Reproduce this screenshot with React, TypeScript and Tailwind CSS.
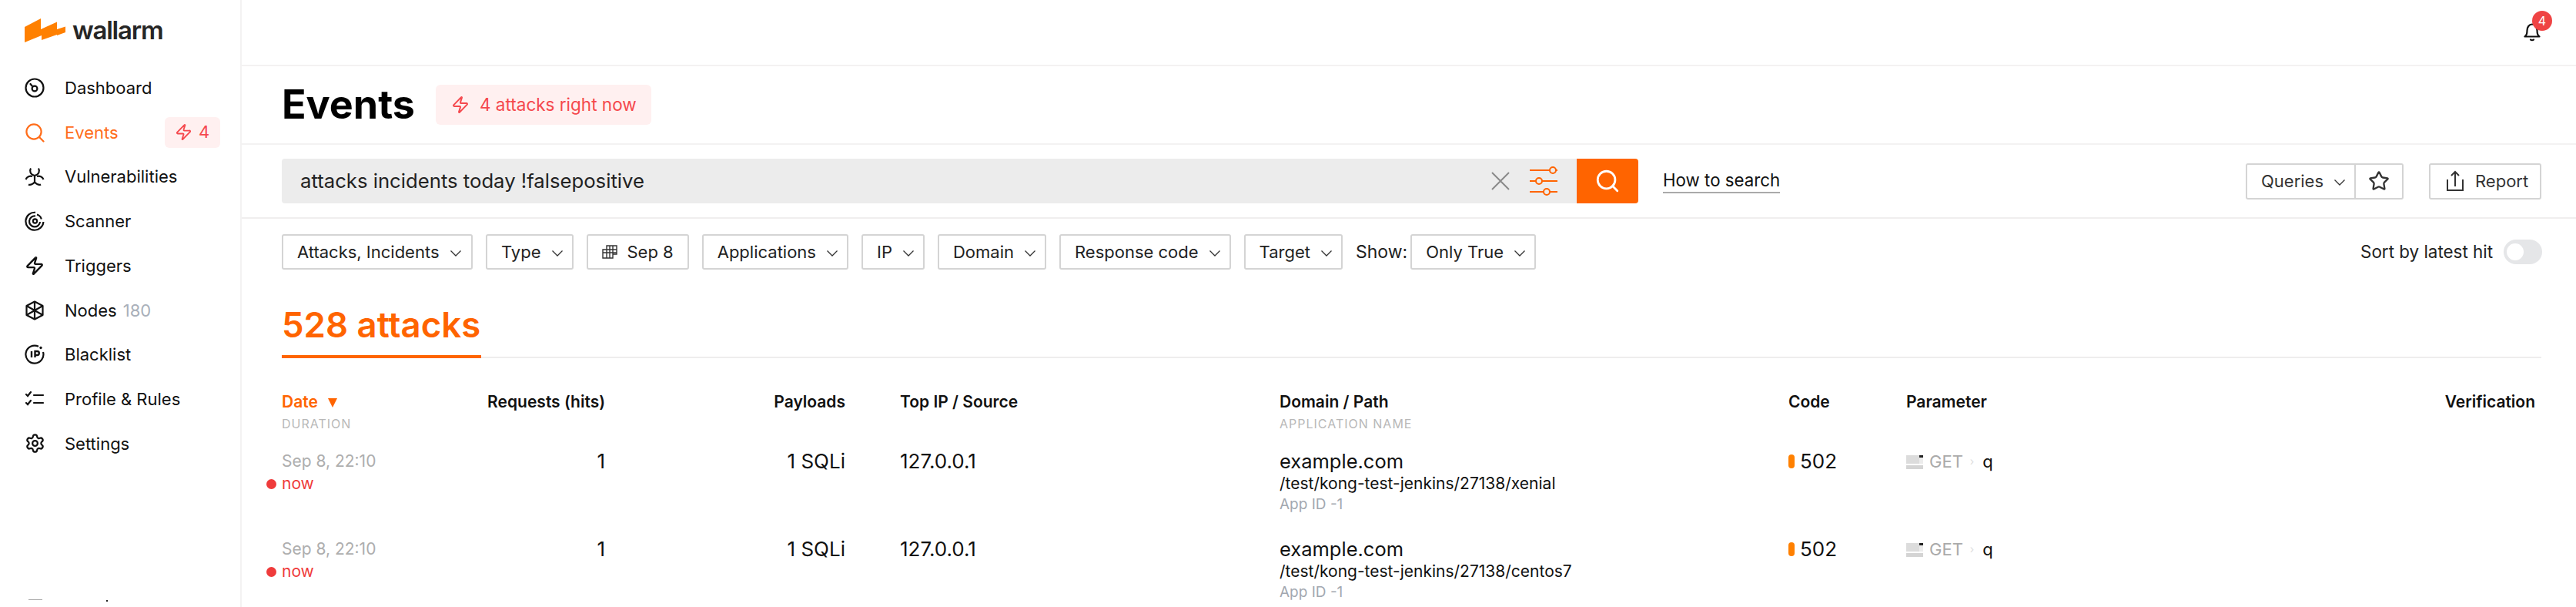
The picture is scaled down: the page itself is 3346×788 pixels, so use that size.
import { Search, Settings, Star, Zap } from "lucide-react";
import React from "react";

const ORANGE = "#ff6400";

function IconDashboard() {
  return (
    <svg width="26" height="26" viewBox="0 0 26 26" fill="none" stroke="#111" strokeWidth="2.2">
      <circle cx="13" cy="13" r="11.5" />
      <circle cx="13" cy="14" r="3.4" />
      <path d="M10.5 11.5 7.5 8" strokeLinecap="round" />
    </svg>
  );
}

function IconEvents() {
  return (
    <svg width="26" height="26" viewBox="0 0 26 26" fill="none" stroke="#ff6d1a" strokeWidth="2.2">
      <circle cx="12" cy="12" r="9.6" />
      <path d="m19 19 5.5 5.5" strokeLinecap="round" />
    </svg>
  );
}

function IconBiohazard() {
  return (
    <svg width="26" height="26" viewBox="0 0 26 26" fill="none" stroke="#111" strokeWidth="2.2">
      <path d="M8 2.5c-2.2 3.8-.6 8 5 9.500 5.600-1.500 7.200-5.700 5-9.500" />
      <path d="M1.500 17c1.300-3.500 5-5.200 8.500-4" />
      <path d="M24.500 17c-1.300-3.500-5-5.200-8.500-4" />
      <path d="M5 23.500c3 1.500 5.500-.5 8-3 2.500 2.500 5 4.500 8 3" />
      <path d="M13 13v7" />
    </svg>
  );
}

function IconScanner() {
  return (
    <svg width="26" height="26" viewBox="0 0 26 26" fill="none" stroke="#111" strokeWidth="2.2">
      <path d="M14 1.800A11.500 11.500 0 1 0 24.400 14" />
      <path d="M14 6.500A7 7 0 1 0 20 14" />
      <circle cx="13.500" cy="13" r="2.600" />
      <path d="M16 4.500c3 .8 5 3 5.800 6" />
    </svg>
  );
}

function IconNodes() {
  return (
    <svg width="26" height="26" viewBox="0 0 26 26" fill="none" stroke="#111" strokeWidth="2.2" strokeLinejoin="round">
      <path d="M13 1.500 23.500 7v12L13 24.500 2.500 19V7z" />
      <path d="M13 1.500v23M2.500 7 23.500 19M23.500 7 2.500 19" />
    </svg>
  );
}

function IconBlacklist() {
  return (
    <svg width="26" height="26" viewBox="0 0 26 26" fill="none" stroke="#111" strokeWidth="2.2">
      <path d="M18 2.800A11.500 11.500 0 1 0 24 10" />
      <path d="M9 9v8M13.500 17V9h2.800a2.500 2.500 0 0 1 0 5h-2.800" strokeWidth="2.400" />
      <circle cx="21" cy="4.500" r="1.300" fill="#111" strokeWidth="1" />
    </svg>
  );
}

function IconProfile() {
  return (
    <svg width="26" height="26" viewBox="0 0 26 26" fill="none" stroke="#111" strokeWidth="2.2" strokeLinecap="round">
      <path d="m2 7 2 2 4-5M2 18l2 2 4-5" />
      <path d="M12 8h12M12 18h12" />
    </svg>
  );
}

function IconSliders() {
  return (
    <svg width="38" height="38" viewBox="0 0 38 38" fill="none" stroke={ORANGE} strokeWidth="2">
      <path d="M1 5h26M35 5h2M1 19h8M17 19h20M1 33h18M27 33h10" />
      <circle cx="31" cy="5" r="4" />
      <circle cx="13" cy="19" r="4" />
      <circle cx="23" cy="33" r="4" />
    </svg>
  );
}

function IconClear() {
  return (
    <svg width="24" height="24" viewBox="0 0 24 24" fill="none" stroke="#8a8a8a" strokeWidth="2">
      <path d="m1 1 22 22M23 1 1 23" />
    </svg>
  );
}

function IconChevron({ className }: { className?: string }) {
  return (
    <svg width="14" height="8" viewBox="0 0 14 8" fill="none" stroke="#333" strokeWidth="1.3" className={className}>
      <path d="m.5.5 6.500 6.500 6.500-6.500" />
    </svg>
  );
}

function IconBell() {
  return (
    <svg width="22" height="26" viewBox="0 0 22 26" fill="none" stroke="#111" strokeWidth="2.2">
      <path d="M1.500 19.500h19c-2.500-1.500-3-3.500-3-8 0-4-2.500-8-6.500-8s-6.500 4-6.500 8c0 4.500-.5 6.500-3 8z" strokeLinejoin="round" />
      <path d="M9 23.500c1 1 3 1 4 0" strokeLinecap="round" />
    </svg>
  );
}

function IconCalendar() {
  return (
    <svg width="20" height="20" viewBox="0 0 20 20" fill="none" stroke="#333" strokeWidth="1.400">
      <path d="M6 2h13v11h-5v5H1V7h5zM6 2v16M10 2v16M14 2v16M1 7h18M1 11h18" />
    </svg>
  );
}

function IconUpload() {
  return (
    <svg width="22" height="28" viewBox="0 0 22 28" fill="none" stroke="#333" strokeWidth="2">
      <path d="M1 12v14h20V12M11 21V2M6 7l5-5 5 5" />
    </svg>
  );
}

function IconMethod() {
  return (
    <svg width="22" height="20" viewBox="0 0 22 20">
      <rect x="0" y="2" width="17" height="11" fill="#dcdcdc" />
      <rect x="17" y="2" width="5" height="3" fill="#222" />
      <rect x="17" y="5" width="5" height="8" fill="#ececec" />
      <rect x="0" y="15" width="22" height="5" fill="#d4d4d4" />
    </svg>
  );
}

const NAV_ITEMS = [
  { label: "Dashboard", icon: <IconDashboard /> },
  { label: "Events", icon: <IconEvents />, active: true },
  { label: "Vulnerabilities", icon: <IconBiohazard /> },
  { label: "Scanner", icon: <IconScanner /> },
  { label: "Triggers", icon: <Zap size={26} strokeWidth={2.2} className="text-[#111]" /> },
  { label: "Nodes", icon: <IconNodes />, count: "180" },
  { label: "Blacklist", icon: <IconBlacklist /> },
  { label: "Profile & Rules", icon: <IconProfile /> },
  { label: "Settings", icon: <Settings size={27} strokeWidth={2} className="text-[#111]" /> },
];

function Sidebar() {
  return (
    <aside className="flex h-full w-[314px] shrink-0 flex-col border-r-2 border-[#f3f2f2]">
      <div className="flex h-[85px] items-center pb-[6px] pl-[32px]">
        <svg width="54" height="32" viewBox="0 0 54 32" className="shrink-0">
          <path d="M0 11 21 0v14l21-9.500V14l11-3.500V18l-11 4v-1L22 28v-6L0 31z" fill="#ff8000" />
        </svg>
        <span className="ml-[8px] text-[33px] leading-none font-semibold tracking-[-1.2px] text-[#262626]">
          wallarm
        </span>
      </div>
      <nav className="flex flex-col">
        {NAV_ITEMS.map((item) => (
          <div key={item.label} className="flex h-[57.75px] items-center pl-[32px]">
            <span className="flex w-[52px] shrink-0 items-center">{item.icon}</span>
            <span
              className={`text-[22px] leading-none ${
                item.active ? "text-[#ff6d1a]" : "text-[#111]"
              }`}
            >
              {item.label}
            </span>
            {item.count && <span className="ml-[8px] text-[22px] leading-none text-[#a9b0ba]">{item.count}</span>}
            {item.active && (
              <span className="ml-[60px] flex h-[40px] w-[72px] items-center justify-center gap-[8px] rounded-[6px] bg-[#fff0f0] text-[22px] text-[#f5484d]">
                <Zap size={23} strokeWidth={2} />4
              </span>
            )}
          </div>
        ))}
      </nav>
      <div className="mt-auto flex h-[10px] items-start pl-[37px]">
        <span className="h-[1px] w-[18px] bg-[#aaaaaa]" />
        <span className="mt-[1px] ml-[83px] h-[2px] w-[2px] bg-[#222]" />
      </div>
    </aside>
  );
}

function FilterButton({
  label,
  icon,
  className = "",
}: {
  label: string;
  icon?: React.ReactNode;
  className?: string;
}) {
  return (
    <button
      className={`flex h-[46px] items-center rounded-[3px] border-2 border-[#d4d4d4] bg-white pl-[18px] text-[22px] leading-none text-[#222] ${
        icon ? "pr-[18px]" : "pr-[12px]"
      } ${className}`}
    >
      {icon ? <span className="mr-[13px] flex items-center">{icon}</span> : null}
      {label}
      {!icon && <IconChevron className="mt-[3px] ml-[14px]" />}
    </button>
  );
}

const ROW_GRID = "grid grid-cols-[220px_200px_312px_564px_661px_153px_1fr_200px] pr-[8px]";

const ROWS = [
  { path: "/test/kong-test-jenkins/27138/xenial" },
  { path: "/test/kong-test-jenkins/27138/centos7" },
];

function EventsTable() {
  return (
    <div className="flex flex-col">
      <div className={`${ROW_GRID} h-[120px] items-start pt-[45px] text-[21px] leading-[24px] font-semibold text-[#111]`}>
        <div>
          <div className="flex items-center text-[#ff6400]">
            Date
            <svg width="12" height="14" viewBox="0 0 12 14" className="mt-[2px] ml-[13px]">
              <path d="M0 1h12L6 13z" fill="#ff6400" />
            </svg>
          </div>
          <div className="mt-[7px] text-[16px] leading-[18px] font-normal tracking-[1px] text-[#b8b8b8]">DURATION</div>
        </div>
        <div className="text-right">Requests (hits)</div>
        <div className="text-right">Payloads</div>
        <div className="pl-[71px]">Top IP / Source</div>
        <div>
          Domain / Path
          <div className="mt-[7px] text-[16px] leading-[18px] font-normal tracking-[1px] text-[#b8b8b8]">APPLICATION NAME</div>
        </div>
        <div>Code</div>
        <div>Parameter</div>
        <div className="text-right">Verification</div>
      </div>
      {ROWS.map((row) => (
        <div key={row.path} className={`${ROW_GRID} h-[114px] items-start text-[26px] leading-[28px] text-[#111]`}>
          <div className="relative">
            <div className="text-[21px] leading-[28px] text-[#aeaeae]">Sep 8, 22:10</div>
            <div className="mt-[1px] text-[21px] leading-[28px] text-[#ef3b3b]">now</div>
            <span className="absolute top-[37px] -left-[20px] h-[13px] w-[13px] rounded-full bg-[#ef3b3b]" />
          </div>
          <div className="text-right">1</div>
          <div className="text-right">1 SQLi</div>
          <div className="pl-[71px]">127.0.0.1</div>
          <div>
            <div className="text-[25.5px] leading-[28px]">example.com</div>
            <div className="text-[21px] leading-[30px]">{row.path}</div>
            <div className="text-[19px] leading-[24px] text-[#a3a8b0]">App ID -1</div>
          </div>
          <div className="flex items-center gap-[7px]">
            <span className="h-[18px] w-[8px] rounded-full bg-[#ff8000]" />
            502
          </div>
          <div className="flex items-center text-[22px]">
            <IconMethod />
            <span className="ml-[8px] text-[#aaaaaa]">GET</span>
            <span className="mr-[11px] ml-[9px] text-[14px] text-[#dddddd]">›</span>
            q
          </div>
          <div />
        </div>
      ))}
    </div>
  );
}

export default function App() {
  return (
    <div
      className="flex h-[788px] w-[3346px] overflow-hidden bg-white"
      style={{ fontFamily: "Inter, 'Liberation Sans', sans-serif" }}
    >
      <Sidebar />
      <main className="flex min-w-0 flex-1 flex-col">
        <header className="flex h-[86px] shrink-0 items-center justify-end border-b-2 border-[#f3f2f2] pr-[46px]">
          <div className="relative mt-[-3px]">
            <IconBell />
            <span className="absolute -top-[14px] -right-[15px] flex h-[26px] w-[26px] items-center justify-center rounded-full bg-[#ef4444] text-[16px] leading-none text-white">
              4
            </span>
          </div>
        </header>

        <section className="flex h-[102px] shrink-0 items-center gap-[27px] border-b-2 border-[#f3f2f2] pl-[52px]">
          <h1 className="text-[52px] leading-none font-bold text-black">Events</h1>
          <div className="flex h-[52px] w-[280px] items-center rounded-[6px] bg-[#fff0f0] pl-[20px] text-[22.5px] text-[#f5484d]">
            <Zap size={24} strokeWidth={2} className="mr-[13px]" />4 attacks right now
          </div>
        </section>

        <section className="flex h-[96px] shrink-0 items-center border-b-2 border-[#f0eeee] pr-[45px] pl-[52px]">
          <div className="flex h-[58px] w-[1682px] items-center rounded-l-[4px] bg-[#ececec] pr-[24px] pl-[24px]">
            <span className="flex-1 text-[25.700px] leading-none text-[#222]">attacks incidents today !falsepositive</span>
            <span className="mr-[25px] flex">
              <IconClear />
            </span>
            <IconSliders />
          </div>
          <button className="flex h-[58px] w-[80px] items-center justify-center rounded-r-[4px] bg-[#ff6400]">
            <Search size={34} strokeWidth={2} className="text-white" />
          </button>
          <a className="ml-[32px] border-b-2 border-[#aaaaaa] text-[22.3px] leading-[30px] text-[#111]">How to search</a>
          <div className="ml-auto flex items-center gap-[33px]">
            <div className="flex h-[47px] items-center rounded-[3px] border-2 border-[#d4d4d4] text-[22px] text-[#333]">
              <span className="flex h-full w-[141px] items-center border-r-2 border-[#d4d4d4] pl-[18px]">
                Queries
                <IconChevron className="mt-[3px] ml-[14px]" />
              </span>
              <span className="flex w-[60px] justify-center">
                <Star size={28} strokeWidth={2} />
              </span>
            </div>
            <button className="flex h-[47px] w-[146px] items-center rounded-[3px] border-2 border-[#d4d4d4] pl-[21px] text-[22px] text-[#333]">
              <span className="mr-[15px] flex">
                <IconUpload />
              </span>
              Report
            </button>
          </div>
        </section>

        <section className="flex shrink-0 items-center gap-[17px] pt-[20px] pr-[44px] pl-[52px]">
          <FilterButton label="Attacks, Incidents" className="w-[248px]" />
          <FilterButton label="Type" />
          <FilterButton label="Sep 8" icon={<IconCalendar />} />
          <FilterButton label="Applications" />
          <FilterButton label="IP" />
          <FilterButton label="Domain" />
          <FilterButton label="Response code" />
          <FilterButton label="Target" />
          <div className="flex items-center gap-[4px]">
            <span className="text-[23px] leading-none text-[#222]">Show:</span>
            <FilterButton label="Only True" />
          </div>
          <div className="ml-auto flex items-center gap-[14px]">
            <span className="text-[22.4px] leading-none text-[#222]">Sort by latest hit</span>
            <span className="flex h-[32px] w-[50px] items-center rounded-full bg-[#e5e6e8] pl-[4px]">
              <span className="h-[22px] w-[22px] rounded-full bg-white" />
            </span>
          </div>
        </section>

        <section className="mr-[45px] ml-[52px] flex flex-col">
          <div className="mt-[36px] flex h-[79px] border-b-2 border-[#eeeded]">
            <h2 className="-mb-[2px] border-b-4 border-[#ff6400] pr-[1px] text-[45.5px] leading-[72px] font-semibold text-[#ff6400]">
              528 attacks
            </h2>
          </div>
          <EventsTable />
        </section>
      </main>
    </div>
  );
}
